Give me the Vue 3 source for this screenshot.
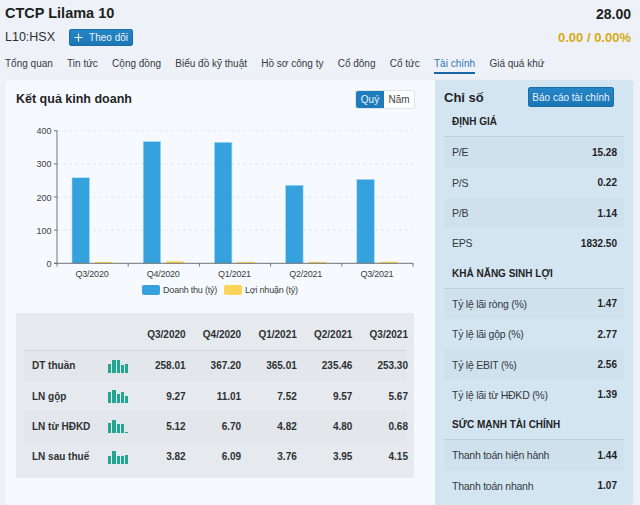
<template>
  <div class="page">
    <header class="head">
      <div class="head-row">
        <h1>CTCP Lilama 10</h1>
        <span class="price">28.00</span>
      </div>
      <div class="head-row second">
        <div class="ticker">
          <span class="code">L10:HSX</span>
          <button class="btn follow">
            <svg viewBox="0 0 10 10" width="9" height="9">
              <path d="M5 .5v9M.5 5h9" fill="none" stroke="currentColor" stroke-width="1.3" />
            </svg>
            Theo dõi
          </button>
        </div>
        <span class="change">0.00 / 0.00%</span>
      </div>
      <nav class="tabs">
        <a v-for="tab in tabs" :key="tab" :class="{ active: tab === 'Tài chính' }">{{ tab }}</a>
      </nav>
    </header>

    <main class="card">
      <section class="results">
        <div class="results-head">
          <h2>Kết quả kinh doanh</h2>
          <div class="toggle">
            <span class="on">Quý</span>
            <span>Năm</span>
          </div>
        </div>

        <svg class="chart" viewBox="0 0 408 160" width="408" height="160">
          <g v-for="t in ticks" :key="t">
            <line v-if="t" x1="41" :x2="397" :y1="yOf(t)" :y2="yOf(t)" class="grid" />
            <line x1="38" x2="41" :y1="yOf(t)" :y2="yOf(t)" class="axis" />
            <text class="tick" x="35.5" :y="yOf(t) + 3.5" text-anchor="end">{{ t }}</text>
          </g>
          <g v-for="(q, i) in quarters" :key="q">
            <rect class="bar-a" :x="56 + i * 71.2" :y="yOf(revenue[i])" width="17.5" :height="143.3 - yOf(revenue[i])" />
            <rect class="bar-b" :x="79 + i * 71.2" :y="yOf(profit[i])" width="17.5" :height="143.3 - yOf(profit[i])" />
            <line :x1="112.2 + i * 71.2" :x2="112.2 + i * 71.2" y1="143" y2="146.5" class="axis" />
            <text :x="76 + i * 71.2" y="156.5" text-anchor="middle">{{ q }}</text>
          </g>
          <line x1="41" x2="41" y1="10.7" y2="146.5" class="axis" />
          <line x1="38" x2="397" y1="143.3" y2="143.3" class="axis" />
        </svg>

        <div class="legend">
          <span><i class="swatch blue"></i>Doanh thu (tỷ)</span>
          <span><i class="swatch yellow"></i>Lợi nhuận (tỷ)</span>
        </div>

        <div class="table">
          <div class="tr th">
            <span class="name"></span>
            <span class="spark"></span>
            <span v-for="q in quarters" :key="q" class="num">{{ q }}</span>
          </div>
          <div v-for="row in rows" :key="row.name" class="tr">
            <span class="name">{{ row.name }}</span>
            <span class="spark">
              <i v-for="(v, i) in row.values" :key="i" :style="{ height: barHeight(row.values, v) + 'px' }"></i>
            </span>
            <span v-for="(v, i) in row.values" :key="i" class="num">{{ v.toFixed(2) }}</span>
          </div>
        </div>
      </section>

      <aside class="ratios">
        <div class="ratios-head">
          <h2>Chỉ số</h2>
          <button class="btn report">Báo cáo tài chính</button>
        </div>
        <template v-for="group in groups" :key="group.title">
          <h3>{{ group.title }}</h3>
          <div v-for="item in group.items" :key="item[0]" class="ratio">
            <span>{{ item[0] }}</span>
            <b>{{ item[1] }}</b>
          </div>
        </template>
      </aside>
    </main>
  </div>
</template>

<script setup>
const tabs = ['Tổng quan', 'Tin tức', 'Cộng đồng', 'Biểu đồ kỹ thuật', 'Hồ sơ công ty', 'Cổ đông', 'Cổ tức', 'Tài chính', 'Giá quá khứ']
const quarters = ['Q3/2020', 'Q4/2020', 'Q1/2021', 'Q2/2021', 'Q3/2021']
const ticks = [0, 100, 200, 300, 400]
const revenue = [258.01, 367.2, 365.01, 235.46, 253.3]
const profit = [3.82, 6.09, 3.76, 3.95, 4.15]

const rows = [
  { name: 'DT thuần', values: revenue },
  { name: 'LN gộp', values: [9.27, 11.01, 7.52, 9.57, 5.67] },
  { name: 'LN từ HĐKD', values: [5.12, 6.7, 4.82, 4.8, 0.68] },
  { name: 'LN sau thuế', values: profit }
]

const groups = [
  {
    title: 'ĐỊNH GIÁ',
    items: [['P/E', '15.28'], ['P/S', '0.22'], ['P/B', '1.14'], ['EPS', '1832.50']]
  },
  {
    title: 'KHẢ NĂNG SINH LỢI',
    items: [['Tỷ lệ lãi ròng (%)', '1.47'], ['Tỷ lệ lãi gộp (%)', '2.77'], ['Tỷ lệ EBIT (%)', '2.56'], ['Tỷ lệ lãi từ HĐKD (%)', '1.39']]
  },
  {
    title: 'SỨC MẠNH TÀI CHÍNH',
    items: [['Thanh toán hiện hành', '1.44'], ['Thanh toán nhanh', '1.07']]
  }
]

function yOf(v) {
  return 143.3 - v * 0.3315
}

function barHeight(values, v) {
  return Math.max(1, Math.round((v / Math.max(...values)) * 13))
}
</script>

<style scoped>
.page {
  width: 640px;
  height: 505px;
  overflow: hidden;
  background: #eef2f8;
  font-family: "Liberation Sans", Arial, sans-serif;
  color: #2b2f33;
}
.head {
  padding: 4px 9px 0 5px;
}
.head-row {
  display: flex;
  justify-content: space-between;
  align-items: center;
  height: 19px;
}
.head-row.second {
  height: 20px;
  margin-top: 4px;
}
h1 {
  margin: 0;
  font-size: 14.5px;
  line-height: 19px;
  color: #1c1f22;
}
.price {
  font-size: 14px;
  font-weight: bold;
  color: #1c1f22;
}
.change {
  font-size: 13px;
  font-weight: bold;
  color: #d6ab14;
}
.ticker {
  display: flex;
  align-items: center;
  gap: 14px;
}
.code {
  font-size: 12.5px;
}
.btn {
  border: 1px solid #1a6fa8;
  border-radius: 2px;
  background: linear-gradient(#2585c6, #1c76b4);
  color: #eaf4fb;
  font-family: inherit;
  padding: 0;
}
.follow {
  display: flex;
  align-items: center;
  justify-content: center;
  gap: 6px;
  width: 64px;
  height: 17px;
  font-size: 10px;
}
.tabs {
  display: flex;
  gap: 14.25px;
  margin-top: 9px;
  height: 24px;
}
.tabs a {
  height: 18px;
  box-sizing: border-box;
  line-height: 15px;
  font-size: 10px;
  color: #343a40;
}
.tabs a.active {
  color: #2a78b5;
  border-bottom: 2px solid #1666a8;
}
.card {
  display: flex;
  width: 628px;
  height: 425px;
  margin-left: 5px;
  border-radius: 3px;
  overflow: hidden;
  background: #f6fafe;
  box-shadow: 0 0 1px #c5ccd4;
}
.results {
  width: 430px;
  padding: 10px 21px 0 11px;
  box-sizing: border-box;
}
.results-head {
  display: flex;
  justify-content: space-between;
  align-items: center;
  height: 18px;
}
.results-head h2 {
  font-size: 12.5px;
  margin-top: -1px;
}
h2 {
  margin: 0;
  font-size: 13px;
  color: #1f2326;
}
.toggle {
  display: flex;
  height: 17px;
  font-size: 10px;
  line-height: 17px;
  border-radius: 2px;
  background: #fff;
  box-shadow: 0 0 0 1px #dfe4e9;
  color: #444;
}
.toggle span {
  width: 30px;
  text-align: center;
}
.toggle .on {
  width: 28px;
  background: #1f7cbc;
  color: #eaf4fb;
  border-radius: 2px 0 0 2px;
}
.chart {
  display: block;
  margin-top: 12px;
}
.chart text {
  font-size: 9px;
  letter-spacing: -0.25px;
  fill: #3c4043;
}
.chart .tick {
  letter-spacing: 0;
}
.grid {
  stroke: #e2e6ea;
  stroke-dasharray: 3 3;
}
.axis {
  stroke: #6f7375;
  stroke-width: 1;
}
.bar-a {
  fill: #36a2dd;
  stroke: #a9dbf3;
  stroke-width: 0.6;
}
.bar-b {
  fill: #fdd24f;
  stroke: #f6e29a;
  stroke-width: 0.5;
}
.legend {
  display: flex;
  justify-content: center;
  gap: 7px;
  height: 33px;
  padding: 5px 0 0 10px;
  box-sizing: border-box;
  font-size: 9px;
  letter-spacing: -0.22px;
  color: #3c4043;
}
.legend span {
  display: flex;
  align-items: center;
  height: 10px;
}
.swatch {
  width: 18px;
  height: 10px;
  margin-right: 3px;
  border-radius: 2px;
}
.blue {
  background: #36a2dd;
}
.yellow {
  background: #fdd45a;
}
.table {
  height: 165px;
  padding: 0 8px;
  box-sizing: border-box;
  border-radius: 2px;
  background: #e6eaee;
  font-size: 10px;
  font-weight: bold;
  color: #2d3135;
}
.tr {
  display: grid;
  grid-template-columns: 84px 22px repeat(5, 55.6px);
  align-items: center;
  height: 30.4px;
}
.tr.th {
  height: 37.5px;
  padding-top: 7px;
  border-bottom: 1px solid #d3d7db;
  box-sizing: border-box;
}
.tr:nth-child(even) {
  background: #e3e7eb;
}
.name {
  padding-left: 8px;
}
.num {
  text-align: right;
}
.spark {
  display: flex;
  align-items: flex-end;
  gap: 1px;
  height: 14px;
}
.spark i {
  width: 3.3px;
  background: #23a592;
}
.ratios {
  width: 198px;
  padding: 0 9px;
  box-sizing: border-box;
  background: #d4e5f2;
}
.ratios-head {
  display: flex;
  justify-content: space-between;
  align-items: center;
  height: 20px;
  padding: 7px 10px 0 0;
}
.report {
  width: 86px;
  height: 20px;
  font-size: 10px;
}
h3 {
  display: flex;
  align-items: center;
  height: 30.3px;
  margin: 0;
  padding-left: 8px;
  font-size: 10px;
  box-sizing: border-box;
  border-bottom: 1px solid #bccfde;
  color: #1f2326;
}
.ratio {
  display: flex;
  justify-content: space-between;
  align-items: center;
  height: 30.3px;
  padding: 0 7px 0 8px;
  font-size: 10.5px;
  letter-spacing: -0.25px;
  color: #33393e;
}
h3 + .ratio,
h3 + .ratio + .ratio + .ratio {
  background: #d0e1ee;
}
.ratio b {
  font-size: 10px;
  letter-spacing: 0;
  color: #1f2326;
}
</style>

<style>
html, body {
  margin: 0;
  overflow: hidden;
}
</style>
